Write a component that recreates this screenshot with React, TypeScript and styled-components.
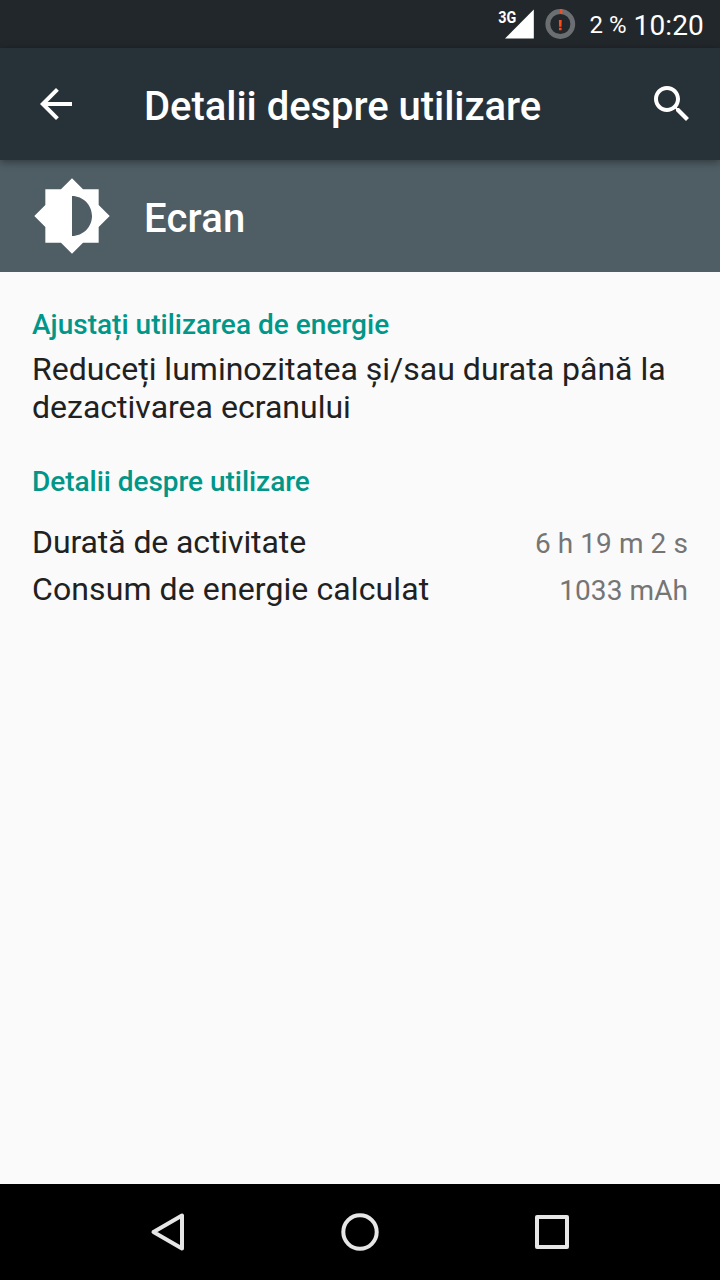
import React from 'react';
import styled, { createGlobalStyle } from 'styled-components';

const GlobalStyle = createGlobalStyle`
  * { box-sizing: border-box; }
  body { margin: 0; background: #fafafa; }
`;

const Screen = styled.div`
  width: 720px;
  height: 1280px;
  display: flex;
  flex-direction: column;
  background: #fafafa;
  font-family: Roboto, sans-serif;
  overflow: hidden;
`;

const StatusBar = styled.header`
  height: 48px;
  flex: none;
  display: flex;
  justify-content: flex-end;
  align-items: center;
  padding-right: 16px;
  background: #22272b;
  color: #fff;
`;

const StatusIcons = styled.svg`
  display: block;
  margin-right: 11px;
`;

const NetworkLabel = styled.text`
  font: 700 17px Roboto, sans-serif;
  fill: #fff;
`;

const BatteryLevel = styled.span`
  font-size: 24px;
  line-height: 28px;
  margin-right: 7px;
  padding-top: 1px;
`;

const Clock = styled.span`
  font-size: 28px;
  line-height: 32px;
  padding-top: 3px;
  letter-spacing: 0.15px;
`;

const AppBar = styled.div`
  height: 112px;
  flex: none;
  display: flex;
  align-items: center;
  padding: 0 24px 0 32px;
  background: #263238;
  box-shadow: 0 2px 8px rgba(0, 0, 0, 0.4);
  z-index: 1;
`;

const BarIcon = styled.svg`
  display: block;
  width: 48px;
  height: 48px;
  flex: none;
  fill: #fff;
`;

const Title = styled.h1`
  flex: 1;
  margin: 0;
  padding: 6px 0 0 64px;
  font-size: 40px;
  line-height: 48px;
  font-weight: 500;
  letter-spacing: -0.04px;
  color: #fff;
`;

const SubjectBar = styled.div`
  height: 112px;
  flex: none;
  display: flex;
  align-items: center;
  padding-left: 32px;
  background: #4f5d64;
`;

const SubjectIcon = styled.svg`
  display: block;
  width: 80px;
  height: 80px;
  fill: #fff;
`;

const SubjectName = styled.h2`
  margin: 0;
  padding: 6px 0 0 32px;
  font-size: 40px;
  line-height: 48px;
  font-weight: 500;
  letter-spacing: 0.2px;
  color: #fff;
`;

const Content = styled.main`
  flex: 1;
  padding: 36px 32px 0;
  color: #212121;
`;

const Section = styled.section<{ $gap: number }>`
  display: flex;
  flex-direction: column;
  gap: ${(p) => p.$gap}px;
  margin-bottom: 39px;
`;

const SectionTitle = styled.h3<{ $tracking: number }>`
  margin: 0;
  font-size: 28px;
  line-height: 33px;
  font-weight: 500;
  letter-spacing: ${(p) => p.$tracking}px;
  color: #009688;
`;

const Description = styled.p`
  margin: 0;
  font-size: 32px;
  line-height: 38px;
  letter-spacing: 0.01px;
`;

const Rows = styled.div`
  display: flex;
  flex-direction: column;
  gap: 9px;
`;

const Row = styled.div`
  display: flex;
  justify-content: space-between;
  align-items: baseline;
  height: 38px;
  font-size: 32px;
  line-height: 38px;
`;

const Label = styled.span<{ $tracking: number }>`
  letter-spacing: ${(p) => p.$tracking}px;
`;

const Value = styled.span`
  font-size: 28px;
  letter-spacing: 0.08px;
  color: #757575;
`;

const NavBar = styled.nav`
  height: 96px;
  flex: none;
  display: flex;
  justify-content: center;
  align-items: center;
  gap: 144px;
  background: #000;
`;

const NavIcon = styled.svg`
  display: block;
  width: 48px;
  height: 48px;
  fill: none;
  stroke: #e6e6e6;
  stroke-width: 4;
  stroke-linejoin: round;
`;

const details = [
  { label: 'Durată de activitate', value: '6 h 19 m 2 s', tracking: -0.1 },
  { label: 'Consum de energie calculat', value: '1033 mAh', tracking: 0.1 },
];

export default function App() {
  return (
    <Screen>
      <GlobalStyle />
      <StatusBar>
        <StatusIcons width="82" height="48" viewBox="0 0 82 48">
          <NetworkLabel x="2.3" y="23" textLength="18" lengthAdjust="spacingAndGlyphs">3G</NetworkLabel>
          <path d="M9 38.5L37.8 9.5V38.5Z" fill="#fff" />
          <circle cx="64.3" cy="24" r="12.5" fill="none" stroke="#6b6f72" strokeWidth="4.8" />
          <path d="M64.1 9h2.2v4.8h-2.2z" fill="#ff4a1a" />
          <path d="M62.9 20h2.8l-.2 6.8h-2.4zM63 27.8h2.6v2.4h-2.6z" fill="#ff4a1a" />
        </StatusIcons>
        <BatteryLevel>2 %</BatteryLevel>
        <Clock>10:20</Clock>
      </StatusBar>
      <AppBar>
        <BarIcon viewBox="0 0 24 24">
          <path d="M20 11H7.83l5.59-5.59L12 4l-8 8 8 8 1.41-1.41L7.83 13H20v-2z" />
        </BarIcon>
        <Title>Detalii despre utilizare</Title>
        <BarIcon viewBox="0 0 24 24">
          <path d="M15.5 14h-.79l-.28-.27C15.41 12.59 16 11.11 16 9.5 16 5.91 13.09 3 9.5 3S3 5.91 3 9.5 5.91 16 9.5 16c1.61 0 3.09-.59 4.23-1.57l.27.28v.79l5 4.99L20.49 19l-4.99-5zm-6 0C7.01 14 5 11.99 5 9.5S7.01 5 9.5 5 14 7.01 14 9.5 11.99 14 9.5 14z" />
        </BarIcon>
      </AppBar>
      <SubjectBar>
        <SubjectIcon viewBox="0 0 24 24">
          <path d="M20 15.31L23.31 12 20 8.69V4h-4.69L12 .69 8.69 4H4v4.69L.69 12 4 15.31V20h4.69L12 23.31 15.31 20H20v-4.69zM12 18V6c3.31 0 6 2.69 6 6s-2.69 6-6 6z" />
        </SubjectIcon>
        <SubjectName>Ecran</SubjectName>
      </SubjectBar>
      <Content>
        <Section $gap={9}>
          <SectionTitle $tracking={0.02}>Ajustați utilizarea de energie</SectionTitle>
          <Description>Reduceți luminozitatea și/sau durata până la dezactivarea ecranului</Description>
        </Section>
        <Section $gap={25}>
          <SectionTitle $tracking={-0.04}>Detalii despre utilizare</SectionTitle>
          <Rows>
            {details.map((d) => (
              <Row key={d.label}>
                <Label $tracking={d.tracking}>{d.label}</Label>
                <Value>{d.value}</Value>
              </Row>
            ))}
          </Rows>
        </Section>
      </Content>
      <NavBar>
        <NavIcon viewBox="0 0 48 48">
          <path d="M9.5 24L38 7.5V40.5Z" />
        </NavIcon>
        <NavIcon viewBox="0 0 48 48">
          <circle cx="24" cy="24" r="16.7" />
        </NavIcon>
        <NavIcon viewBox="0 0 48 48">
          <rect x="9" y="9" width="30" height="30" />
        </NavIcon>
      </NavBar>
    </Screen>
  );
}
